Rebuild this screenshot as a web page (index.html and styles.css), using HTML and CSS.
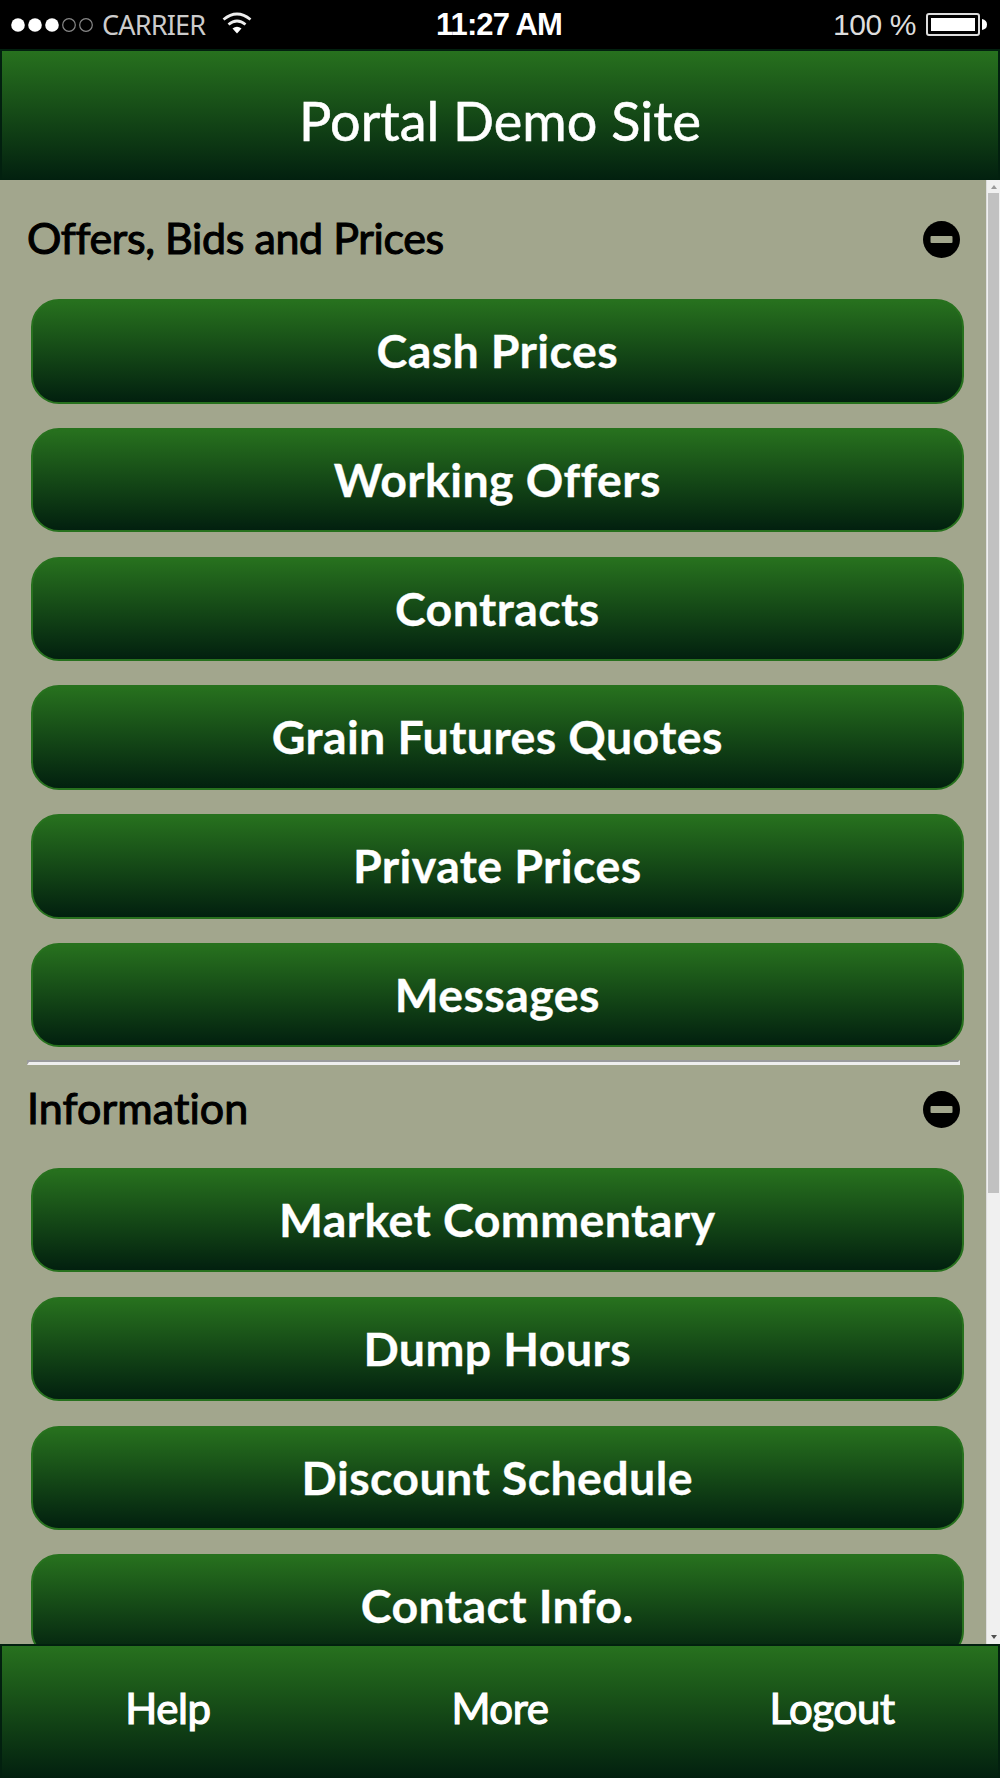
FILE: index.html
```html
<!DOCTYPE html>
<html lang="en">
<head>
  <meta charset="UTF-8">
  <title>Portal Demo Site</title>
  <link rel="stylesheet" href="styles.css">
</head>
<body>

  <div class="status">
    <div class="status-left">
      <svg class="dots" width="84" height="16" viewBox="0 0 84 16">
        <g fill="#fff">
          <circle cx="7" cy="8" r="6.800"/>
          <circle cx="24" cy="8" r="6.800"/>
          <circle cx="41" cy="8" r="6.800"/>
        </g>
        <g fill="none" stroke="#888" stroke-width="1.2">
          <circle cx="58" cy="8" r="6.300"/>
          <circle cx="75" cy="8" r="6.300"/>
        </g>
      </svg>
      <span class="carrier">CARRIER</span>
      <svg class="wifi" width="30" height="22" viewBox="0 0 30 22">
        <g fill="none" stroke="#eee" stroke-width="2.800">
          <path d="M1.500 7.500Q15-3.500 28.500 7.500"/>
          <path d="M6.500 12.500Q15 5.500 23.500 12.500"/>
        </g>
        <path d="M10.500 16.500Q15 13 19.500 16.500L15 21.500Z" fill="#fff"/>
      </svg>
    </div>
    <span class="clock">11:27 AM</span>
    <div class="status-right">
      <span class="percent">100 %</span>
      <svg width="62" height="23" viewBox="0 0 62 23">
        <rect x="2" y="1" width="52" height="21" rx="2" fill="none" stroke="#ddd" stroke-width="2"/>
        <rect x="6" y="5" width="44" height="13" fill="#fff"/>
        <path d="M57 6Q62 7 62 11.500T57 17Z" fill="#fff"/>
      </svg>
    </div>
  </div>

  <header><h1>Portal Demo Site</h1></header>

  <div class="content">
    <main>
      <section>
        <div class="section-head">
          <h2>Offers, Bids and Prices</h2>
          <svg width="37" height="37" viewBox="0 0 37 37">
            <circle cx="18.500" cy="18.500" r="18.500"/>
            <rect x="7.500" y="15" width="22" height="7" rx="1" fill="#a2a68d"/>
          </svg>
        </div>
        <a class="btn" href="#">Cash Prices</a>
        <a class="btn" href="#">Working Offers</a>
        <a class="btn" href="#">Contracts</a>
        <a class="btn" href="#">Grain Futures Quotes</a>
        <a class="btn" href="#">Private Prices</a>
        <a class="btn" href="#">Messages</a>
      </section>

      <hr>

      <section>
        <div class="section-head info">
          <h2>Information</h2>
          <svg width="37" height="37" viewBox="0 0 37 37">
            <circle cx="18.500" cy="18.500" r="18.500"/>
            <rect x="7.500" y="15" width="22" height="7" rx="1" fill="#a2a68d"/>
          </svg>
        </div>
        <a class="btn" href="#">Market Commentary</a>
        <a class="btn" href="#">Dump Hours</a>
        <a class="btn" href="#">Discount Schedule</a>
        <a class="btn" href="#">Contact Info.</a>
      </section>
    </main>

    <div class="scrollbar">
      <svg class="up" width="6" height="4" viewBox="0 0 6 4"><path d="M0 4L3 0L6 4Z"/></svg>
      <div class="thumb"></div>
      <svg class="down" width="6" height="4" viewBox="0 0 6 4"><path d="M0 0H6L3 4Z"/></svg>
    </div>
  </div>

  <footer>
    <a href="#">Help</a>
    <a href="#">More</a>
    <a href="#">Logout</a>
  </footer>

</body>
</html>
```
FILE: styles.css
```css
* {
  box-sizing: border-box;
}

body {
  margin: 0;
  height: 1778px;
  display: flex;
  flex-direction: column;
  overflow: hidden;
  background: #a2a68d;
  font-family: Lato, sans-serif;
}

a {
  color: #fff;
  text-decoration: none;
}

.status {
  height: 49px;
  flex: none;
  padding: 0 13px 0 11px;
  display: grid;
  grid-template-columns: 1fr auto 1fr;
  align-items: center;
  background: #000;
  color: #fff;
  font-family: "Liberation Sans", sans-serif;
}

.status-left, .status-right {
  display: flex;
  align-items: center;
}

.status-right {
  justify-content: flex-end;
  gap: 9px;
}

.carrier {
  margin: 0 17px 0 7px;
  font-family: "Noto Sans", sans-serif;
  font-size: 27px;
  line-height: 48px;
  letter-spacing: -0.8px;
  color: #ccc;
}

.wifi {
  margin-top: -3px;
}

.clock {
  font-size: 31px;
  font-weight: bold;
  letter-spacing: -0.900px;
}

.percent {
  font-size: 30px;
  letter-spacing: -0.400px;
  color: #ddd;
}

header {
  height: 131px;
  flex: none;
  border: 2px solid #02200f;
  border-bottom: 0;
  background: linear-gradient(#27711e, #02200f);
}

h1 {
  margin: 0;
  color: #fff;
  font-size: 54px;
  font-weight: normal;
  line-height: 140px;
  text-align: center;
  -webkit-text-stroke: 0.600px #fff;
}

.content {
  height: 1464px;
  flex: none;
  display: flex;
  overflow: hidden;
}

main {
  flex: 1;
  padding: 0 22.500px 0 27px;
}

.section-head {
  height: 119px;
  padding-right: 4px;
  display: flex;
  align-items: center;
  justify-content: space-between;
}

.section-head.info {
  height: 103.200px;
  padding-bottom: 14px;
}

h2 {
  margin: -4px 0 0;
  font-size: 43px;
  font-weight: normal;
  letter-spacing: -0.400px;
  -webkit-text-stroke: 1.100px #000;
}

.info h2 {
  letter-spacing: 0.100px;
}

.btn {
  display: block;
  height: 104.500px;
  margin: 0 0 24.300px 4px;
  border: 2px solid #27711e;
  border-radius: 28px;
  background: linear-gradient(#27711e, #02200f);
  font-size: 46.500px;
  font-weight: bold;
  letter-spacing: 0.400px;
  line-height: 99px;
  text-align: center;
  -webkit-text-stroke: 0.300px #fff;
}

hr {
  height: 5px;
  margin: -12px 3.500px 0 0;
  border: 2px solid;
  border-bottom-width: 3px;
  border-color: #999a9c #eee #eee #999a9c;
}

.scrollbar {
  width: 14px;
  display: flex;
  flex-direction: column;
  align-items: center;
  background: #f0f0f0;
  border-left: 1px solid #ddd;
}

.up {
  margin: 5px 0 4px;
  fill: #999;
}

.thumb {
  width: 11px;
  height: 1000px;
  background: #c1c1c1;
}

.down {
  margin-top: auto;
  margin-bottom: 5px;
  fill: #505050;
}

footer {
  height: 134px;
  flex: none;
  display: grid;
  grid-template-columns: repeat(3, 1fr);
  border: 2px solid #02200f;
  border-bottom: 0;
  background: linear-gradient(#27711e, #02200f);
  font-size: 42px;
  letter-spacing: -0.400px;
  line-height: 124px;
  text-align: center;
  -webkit-text-stroke: 1.200px #fff;
}
```
